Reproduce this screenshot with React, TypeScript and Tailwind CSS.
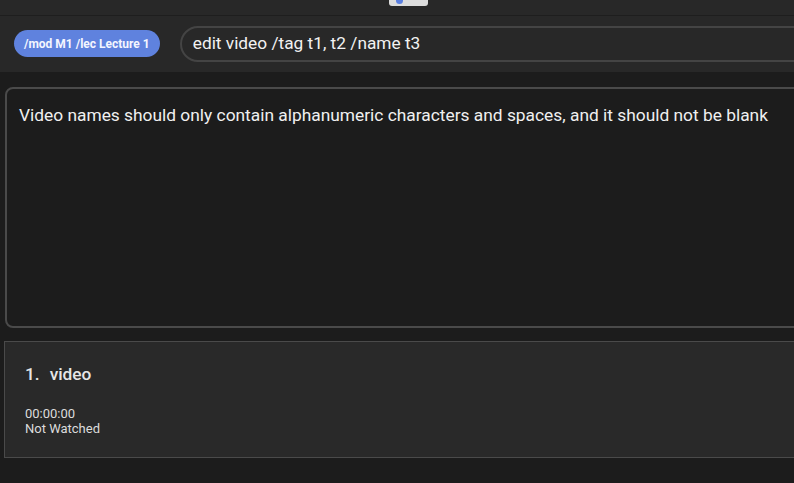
import React from 'react';

const font = { fontFamily: 'Roboto, "Noto Sans", sans-serif' };

const App: React.FC = () => {
  return (
    <div className="w-[794px] h-[483px] overflow-hidden bg-[#1c1c1c] text-white" style={font}>
      <div className="w-[840px]">
        {/* top strip */}
        <div className="h-[15px] bg-[#282828] flex justify-start">
          <div className="ml-[389px] w-[39px] h-[6px] bg-[#dcdcdc] rounded-b-[3px] relative overflow-hidden">
            <div className="absolute left-[7px] top-[-4px] w-[7px] h-[8px] rounded-full bg-[#5a7fe0]"></div>
          </div>
        </div>
        <div className="h-px bg-[#1e1e1e]"></div>

        {/* command bar */}
        <div className="h-[56px] bg-[#282828] flex items-center pl-[14px] gap-[20px]">
          <div className="h-[27px] px-[10px] rounded-full bg-[#5f82de] flex items-center text-[12px] font-bold text-[#f4f6ff] mt-[-1px]">
            /mod M1 /lec Lecture 1
          </div>
          <div className="flex-1 h-[36px] rounded-full border-2 border-[#444444] flex items-center pl-[11px] text-[17.3px] text-[#f2f2f2] mt-[-1px]">
            edit video /tag t1, t2 /name t3
          </div>
        </div>

        {/* result box */}
        <div className="ml-[5px] mt-[15px] h-[241px] rounded-[8px] border-2 border-[#4a4a4a] px-[12px] pt-[13px] text-[17.35px] text-[#f0f0f0]">
          Video names should only contain alphanumeric characters and spaces, and it should not be blank
        </div>

        {/* list card */}
        <div className="ml-[4px] mt-[13px] h-[117px] bg-[#292929] border border-[#4a4a4a] pl-[20px] pt-[20px]">
          <div className="text-[17.3px] font-medium text-[#e6e6e6] flex gap-[10px]">
            <span>1.</span>
            <span>video</span>
          </div>
          <div className="mt-[18px] text-[13px] leading-[15px] text-[#dcdcdc]">
            <div>00:00:00</div>
            <div>Not Watched</div>
          </div>
        </div>
      </div>
    </div>
  );
};

export default App;
